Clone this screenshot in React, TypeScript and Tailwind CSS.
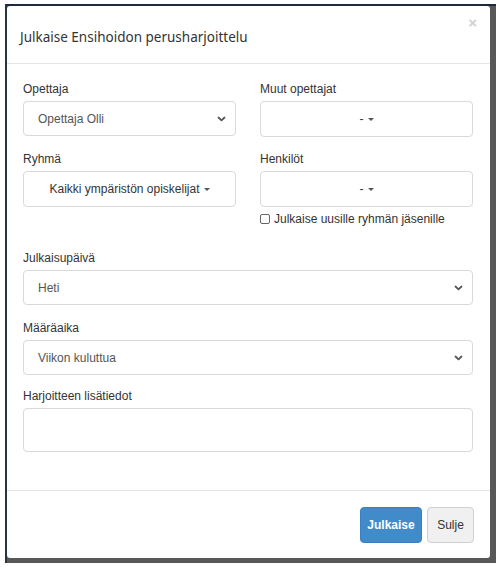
import React from "react";

function Chevron() {
  return (
    <svg width="9" height="6" viewBox="0 0 9 6" className="shrink-0">
      <path d="M1.5 1.5 L4.5 4.3 L7.5 1.5" fill="none" stroke="#555" strokeWidth="1.8" strokeLinecap="round" strokeLinejoin="round" />
    </svg>
  );
}

function Caret() {
  return <span className="ml-[4px] inline-block h-0 w-0 border-x-[3px] border-t-[3.5px] border-x-transparent border-t-[#555] align-middle" />;
}

function Label({ children }: { children: React.ReactNode }) {
  return <div className="mb-[3px] text-[12px] leading-[18px] text-[#333]">{children}</div>;
}

function Select({ value }: { value: string }) {
  return (
    <div className="flex h-[35px] items-center justify-between rounded-[4px] border border-[#d9d9d9] bg-white pl-[14px] pr-[9px] text-[12px] text-[#555]">
      <span>{value}</span>
      <Chevron />
    </div>
  );
}

function DropButton({ children }: { children: React.ReactNode }) {
  return (
    <div className="flex h-[36px] items-center justify-center rounded-[4px] border border-[#d9d9d9] bg-white text-[12px] text-[#333]">
      <span className="flex items-center">{children}<Caret /></span>
    </div>
  );
}

export default function App() {
  return (
    <div className="h-[567px] w-[498px] overflow-hidden bg-white" style={{ fontFamily: '"Liberation Sans", Arial, sans-serif' }}>
      <div className="ml-[5px] mt-[4px] w-[491px] border-l-2 border-t-2 border-l-[#2a3340] border-t-[#1f2a38] bg-[#585858] pb-[5px] pr-[6px]">
        <div className="h-[552px] w-[483px] rounded-[3px] bg-white">
          {/* header */}
          <div className="relative h-[58px] border-b border-[#e5e5e5] pl-[13px] pt-[21px]">
            <div className="text-[13.5px] leading-[20px] text-[#333]" style={{ fontFamily: '"Noto Sans", "Open Sans", sans-serif' }}>
              Julkaise Ensihoidon perusharjoittelu
            </div>
            <span className="absolute right-[13px] top-[7px] text-[15px] font-bold leading-[20px] text-[#d0d0d0]">×</span>
          </div>
          {/* body */}
          <div className="h-[426px] pl-[16px] pr-[17px] pt-[16px]">
            <div className="grid grid-cols-2 gap-x-[24px]">
              <div>
                <Label>Opettaja</Label>
                <Select value="Opettaja Olli" />
              </div>
              <div>
                <Label>Muut opettajat</Label>
                <DropButton>- </DropButton>
              </div>
              <div className="mt-[13px]">
                <Label>Ryhmä</Label>
                <DropButton>Kaikki ympäristön opiskelijat</DropButton>
              </div>
              <div className="mt-[13px]">
                <Label>Henkilöt</Label>
                <DropButton>- </DropButton>
                <div className="mt-[3px] flex items-center text-[12px] leading-[18px] text-[#333]">
                  <span className="mr-[4px] inline-block h-[10px] w-[10px] rounded-[2px] border border-[#666] bg-white" />
                  Julkaise uusille ryhmän jäsenille
                </div>
              </div>
            </div>
            <div className="mt-[21px]">
              <Label>Julkaisupäivä</Label>
              <Select value="Heti" />
            </div>
            <div className="mt-[14px]">
              <Label>Määräaika</Label>
              <Select value="Viikon kuluttua" />
            </div>
            <div className="mt-[12px]">
              <Label>Harjoitteen lisätiedot</Label>
              <div className="h-[44px] rounded-[4px] border border-[#d9d9d9] bg-white" />
            </div>
          </div>
          {/* footer */}
          <div className="flex justify-end gap-[5px] border-t border-[#e5e5e5] pr-[16px] pt-[16px]">
            <button className="h-[36px] w-[62px] rounded-[4px] border border-[#3c7fc0] bg-[#428bca] text-[12px] font-bold text-white">
              Julkaise
            </button>
            <button className="h-[36px] w-[47px] rounded-[4px] border border-[#cfcfcf] bg-[#f0f0f0] text-[12px] text-[#333]">
              Sulje
            </button>
          </div>
        </div>
      </div>
    </div>
  );
}
